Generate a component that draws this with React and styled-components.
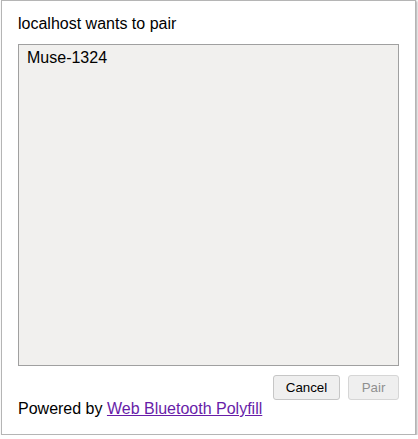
import React from "react";
import styled, { createGlobalStyle } from "styled-components";

const Global = createGlobalStyle`
  html, body { margin: 0; padding: 0; background: #ffffff; }
  body { font-family: "Liberation Sans", Arial, sans-serif; }
`;

const Dialog = styled.div`
  box-sizing: border-box;
  margin: 0 0 0 1px;
  width: 415px;
  height: 435px;
  background: #ffffff;
  border: 1px solid #b5b5b5;
  box-shadow: 1px 1px 2px rgba(0, 0, 0, 0.35);
  padding: 14px 16px 0 16px;
  display: flex;
  flex-direction: column;
  font-size: 16px;
  line-height: 18px;
  color: #000;
`;

const Title = styled.div`
  margin-bottom: 11px;
`;

const List = styled.div`
  box-sizing: border-box;
  height: 322px;
  background: #f1f0ee;
  border: 1px solid #a0a0a0;
  padding: 4px 0 0 8px;
`;

const Option = styled.div`
  font-size: 16px;
  line-height: 18px;
`;

const Actions = styled.div`
  display: flex;
  justify-content: flex-end;
  gap: 8px;
  margin-top: 9px;
`;

const Button = styled.button`
  box-sizing: border-box;
  height: 25px;
  width: ${(p) => (p.$wide ? "67px" : "51px")};
  padding: 0;
  font-family: "Liberation Sans", Arial, sans-serif;
  font-size: 13.33px;
  background: #efefef;
  border: 1px solid ${(p) => (p.disabled ? "#d6d6d6" : "#c6c6c6")};
  border-radius: 3px;
  color: ${(p) => (p.disabled ? "#8f8f8f" : "#000")};
`;

const Footer = styled.div`
  margin-top: 0px;
`;

const Link = styled.a`
  color: #681da8;
  text-decoration: underline;
`;

export default function App() {
  return (
    <>
      <Global />
      <Dialog>
        <Title>localhost wants to pair</Title>
        <List>
          <Option>Muse-1324</Option>
        </List>
        <Actions>
          <Button $wide>Cancel</Button>
          <Button disabled>Pair</Button>
        </Actions>
        <Footer>
          Powered by <Link href="#">Web Bluetooth Polyfill</Link>
        </Footer>
      </Dialog>
    </>
  );
}
